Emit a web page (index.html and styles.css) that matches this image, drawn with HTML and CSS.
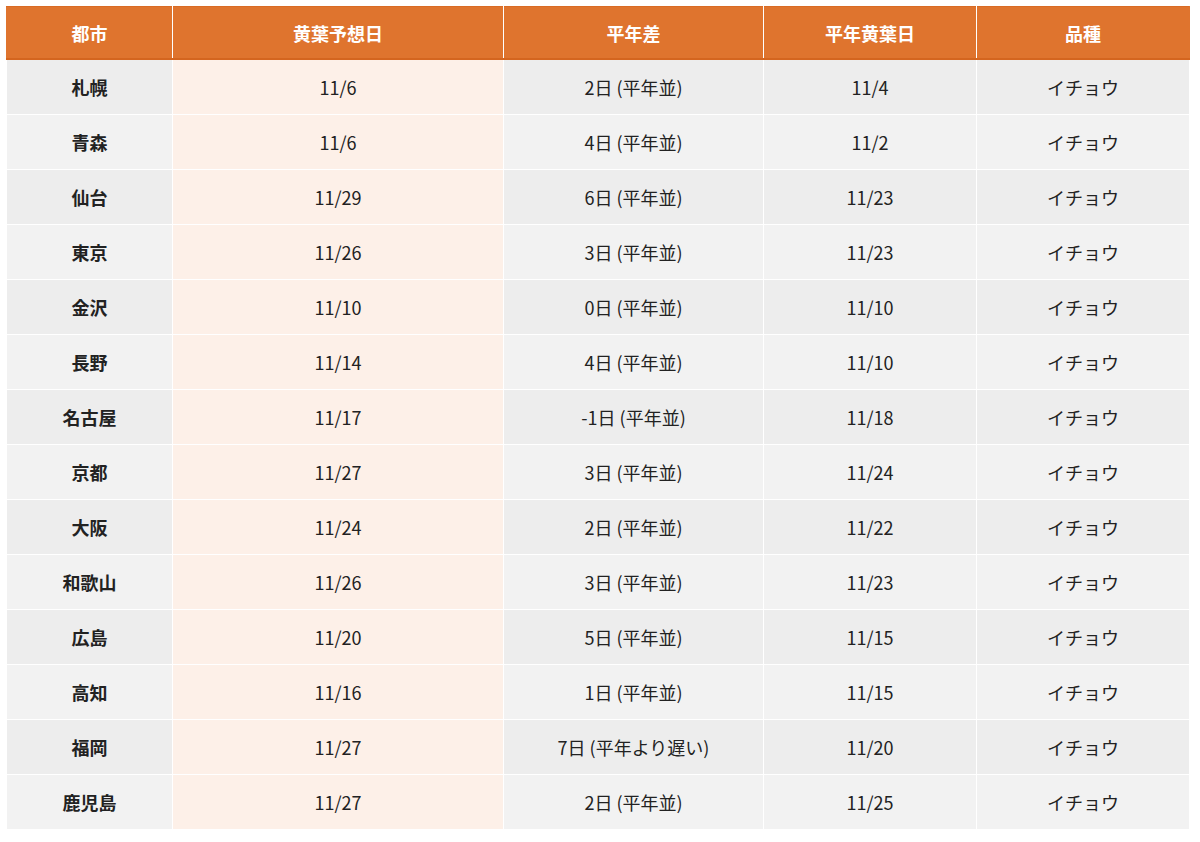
FILE: index.html
```html
<!DOCTYPE html>
<html lang="ja">
<head>
<meta charset="utf-8">
<link rel="stylesheet" href="styles.css">
</head>
<body>
<div class="wrap">
<table class="tbl">
<colgroup>
<col class="c1"><col class="c2"><col class="c3"><col class="c4"><col class="c5">
</colgroup>
<thead>
<tr><th>都市</th><th>黄葉予想日</th><th>平年差</th><th>平年黄葉日</th><th>品種</th></tr>
</thead>
<tbody>
<tr><th>札幌</th><td class="hl">11/6</td><td>2日 (平年並)</td><td>11/4</td><td>イチョウ</td></tr>
<tr><th>青森</th><td class="hl">11/6</td><td>4日 (平年並)</td><td>11/2</td><td>イチョウ</td></tr>
<tr><th>仙台</th><td class="hl">11/29</td><td>6日 (平年並)</td><td>11/23</td><td>イチョウ</td></tr>
<tr><th>東京</th><td class="hl">11/26</td><td>3日 (平年並)</td><td>11/23</td><td>イチョウ</td></tr>
<tr><th>金沢</th><td class="hl">11/10</td><td>0日 (平年並)</td><td>11/10</td><td>イチョウ</td></tr>
<tr><th>長野</th><td class="hl">11/14</td><td>4日 (平年並)</td><td>11/10</td><td>イチョウ</td></tr>
<tr><th>名古屋</th><td class="hl">11/17</td><td>-1日 (平年並)</td><td>11/18</td><td>イチョウ</td></tr>
<tr><th>京都</th><td class="hl">11/27</td><td>3日 (平年並)</td><td>11/24</td><td>イチョウ</td></tr>
<tr><th>大阪</th><td class="hl">11/24</td><td>2日 (平年並)</td><td>11/22</td><td>イチョウ</td></tr>
<tr><th>和歌山</th><td class="hl">11/26</td><td>3日 (平年並)</td><td>11/23</td><td>イチョウ</td></tr>
<tr><th>広島</th><td class="hl">11/20</td><td>5日 (平年並)</td><td>11/15</td><td>イチョウ</td></tr>
<tr><th>高知</th><td class="hl">11/16</td><td>1日 (平年並)</td><td>11/15</td><td>イチョウ</td></tr>
<tr><th>福岡</th><td class="hl">11/27</td><td>7日 (平年より遅い)</td><td>11/20</td><td>イチョウ</td></tr>
<tr><th>鹿児島</th><td class="hl">11/27</td><td>2日 (平年並)</td><td>11/25</td><td>イチョウ</td></tr>
</tbody>
</table>
</div>
</body>
</html>
```
FILE: styles.css
```css
html, body {
  margin: 0;
  padding: 0;
  background: #fff;
}
.wrap {
  padding: 6px 0 0 6px;
}
.tbl {
  width: 1183px;
  border-collapse: collapse;
  table-layout: fixed;
  font-family: "Noto Sans CJK JP", "Noto Sans", sans-serif;
  font-size: 18px;
  color: #222;
}
.c1 { width: 166px; }
.c2 { width: 331px; }
.c3 { width: 260px; }
.c4 { width: 213px; }
.c5 { width: 213px; }
.tbl th, .tbl td {
  border: 1px solid #fff;
  text-align: center;
  vertical-align: middle;
  padding: 0;
}
.tbl thead th {
  height: 51px;
  background: #df742e;
  color: #fff;
  font-weight: 700;
  border-top: 1px solid #d96b24;
  border-bottom: 2px solid #d4651f;
}
.tbl thead th:first-child { border-left-color: #df742e; }
.tbl thead th:last-child { border-right-color: #df742e; }
.tbl tbody tr { height: 55px; }
.tbl tbody th {
  font-weight: 700;
}
.tbl tbody tr:nth-child(odd) th,
.tbl tbody tr:nth-child(odd) td { background: #ededed; }
.tbl tbody tr:nth-child(even) th,
.tbl tbody tr:nth-child(even) td { background: #f2f2f2; }
.tbl tbody tr td.hl { background: #fdf0e8; }
.tbl tbody tr:last-child th,
.tbl tbody tr:last-child td { border-bottom: none; }
```
